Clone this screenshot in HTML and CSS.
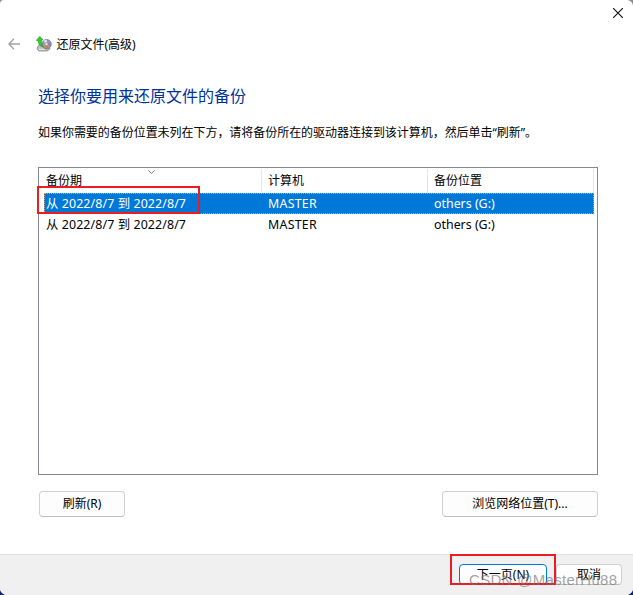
FILE: index.html
```html
<!DOCTYPE html>
<html lang="zh-CN">
<head>
<meta charset="utf-8">
<title>还原文件(高级)</title>
<link rel="stylesheet" href="styles.css">
</head>
<body>
<div class="dialog">
  <div class="titlebar">
    <svg class="close" width="10" height="10" viewBox="0 0 10 10"><path d="M0 0L10 10M10 0L0 10" stroke="#111" stroke-width="1.15"/></svg>
  </div>
  <header class="nav">
    <svg class="back" width="12" height="12" viewBox="0 0 12 12" fill="none" stroke="#a3a3a3" stroke-width="1.4"><path d="M12 6H1M6 .8L.9 6L6 11.2"/></svg>
    <svg class="app-icon" width="16" height="16" viewBox="0 0 16 16">
      <path d="M2 10L5 8H12L14 13L11 15H3L1 13Z" fill="#b9bdb9" stroke="#7b807b" stroke-width=".7"/>
      <path d="M3 13.3H9" stroke="#eef2ee"/>
      <circle cx="10.6" cy="8.2" r="4.6" fill="#9c9aac" stroke="#6b6977" stroke-width=".8"/>
      <path d="M10.6 8.2L7.5 5A4.4 4.4 0 0 1 11 3.8Z" fill="#dddcf0"/>
      <path d="M10.6 8.2L14.7 6.2A4.4 4.4 0 0 1 14.5 10Z" fill="#7c83c5"/>
      <path d="M10.6 8.2L13 12A4.4 4.4 0 0 1 9 12.2Z" fill="#d9793e"/>
      <circle cx="10.6" cy="8.2" r="1.4" fill="#f5eeee" stroke="#876" stroke-width=".5"/>
      <path d="M3.7 .5L7 3.7L5.3 4.2C5.1 6.7 5.6 8.8 7 10.7C4 10.2 2.2 8 2.3 4.6L.4 4.4Z" fill="#35cf27" stroke="#199a18" stroke-width=".7"/>
    </svg>
    <span class="nav-title">还原文件(高级)</span>
  </header>
  <main class="content">
    <h1>选择你要用来还原文件的备份</h1>
    <p>如果你需要的备份位置未列在下方，请将备份所在的驱动器连接到该计算机，然后单击“刷新”。</p>
    <div class="list">
      <div class="row head">
        <span>备份期<svg class="sort" width="7" height="4" viewBox="0 0 7 4" fill="none" stroke="#777"><path d="M.3 .3L3.5 3.4L6.7 .3"/></svg></span><span>计算机</span><span>备份位置</span>
      </div>
      <div class="row selected"><span class="period">从 2022/8/7 到 2022/8/7</span><span class="host">MASTER</span><span>others (G:)</span><i class="mark mark-row"></i></div>
      <div class="row"><span class="period">从 2022/8/7 到 2022/8/7</span><span class="host">MASTER</span><span>others (G:)</span></div>
    </div>
    <div class="actions">
      <button class="refresh">刷新(R)</button>
      <button class="browse">浏览网络位置(T)...</button>
    </div>
  </main>
  <footer class="footer">
    <button class="next">下一页(N)</button>
    <button class="cancel">取消</button>
    <i class="mark mark-next"></i>
    <span class="watermark">CSDN @MasterHu88</span>
  </footer>
</div>
</body>
</html>
```
FILE: styles.css
```css
* { box-sizing: border-box; }
body {
  margin: 0;
  background: linear-gradient(#8a8a8a 50%, #14246b 50%);
  font: 12px/16px "Noto Sans", "Noto Sans CJK SC", sans-serif;
  color: #000;
}
.dialog {
  display: flex;
  flex-direction: column;
  width: 633px;
  height: 595px;
  overflow: hidden;
  background: #fff;
  border-radius: 4px 6px 7px 7px;
}
.titlebar {
  display: flex;
  justify-content: flex-end;
  height: 32px;
  padding: 8px 10px 0 0;
}
.nav {
  display: flex;
  align-items: center;
  height: 24px;
  padding-left: 8px;
}
.app-icon { margin: 0 4.5px 0 16px; }
.nav-title { padding-top: 2px; }
.content { flex: 1; padding: 29px 35px 0 38px; }
h1 {
  margin: 0;
  font-size: 16px;
  line-height: 22px;
  font-weight: 400;
  color: #003399;
}
p { margin: 18px 0 26px; white-space: nowrap; letter-spacing: -.04px; }
.list {
  height: 308px;
  border: 1px solid #828790;
  padding-right: 3px;
}
.row {
  position: relative;
  display: grid;
  grid-template-columns: 217px 166px 1fr;
  height: 21px;
  margin-left: 5px;
  line-height: 21px;
  font-size: 12.4px;
  border: 1px solid transparent;
  border-width: 0 1px;
}
.row > span { padding-left: 6px; white-space: nowrap; }
.row > .period { padding-left: 1px; letter-spacing: .1px; }
.row > .host { letter-spacing: .25px; }
.row.head {
  height: 25px;
  padding-top: 1px;
  line-height: 24px;
  font-size: 12px;
  border-width: 0;
  grid-template-columns: 218px 166px 1fr;
}
.row.head > span {
  position: relative;
  border-right: 1px solid #e5e5e5;
}
.row.head > span:first-child { padding-left: 2px; }
.sort { position: absolute; left: 104px; top: 1px; }
.row.selected {
  color: #fff;
  background: #0078d7;
  border: 1px dotted #ff9b42;
  line-height: 19px;
}
.mark {
  position: absolute;
  border: 2px solid #ed1c24;
}
.mark-row { left: -8px; top: -8px; width: 163px; height: 28px; }
.actions {
  display: flex;
  justify-content: space-between;
  padding: 16px 0 0 1px;
}
button {
  height: 26px;
  padding: 0;
  border: 1px solid #d0d0d0;
  border-bottom-color: #bdbdbd;
  border-radius: 4px;
  background: #fdfdfd;
  font: inherit;
  color: #000;
}
.refresh { width: 86px; }
.browse { width: 156px; }
.footer {
  position: relative;
  display: flex;
  justify-content: flex-end;
  gap: 9px;
  height: 41px;
  padding: 9px 11px 0 0;
  border-top: 1px solid #dfdfdf;
  background: #f0f0f0;
}
.footer button { height: 21px; }
.next { width: 88px; border-color: #0078d4; }
.cancel { width: 66px; }
.mark-next { left: 450px; top: -1px; width: 106px; height: 31px; }
.watermark {
  position: absolute;
  left: 469px;
  top: 16px;
  font: 15px/18px "Liberation Sans", sans-serif;
  letter-spacing: .3px;
  color: rgba(110, 110, 110, .65);
  white-space: nowrap;
}
```
